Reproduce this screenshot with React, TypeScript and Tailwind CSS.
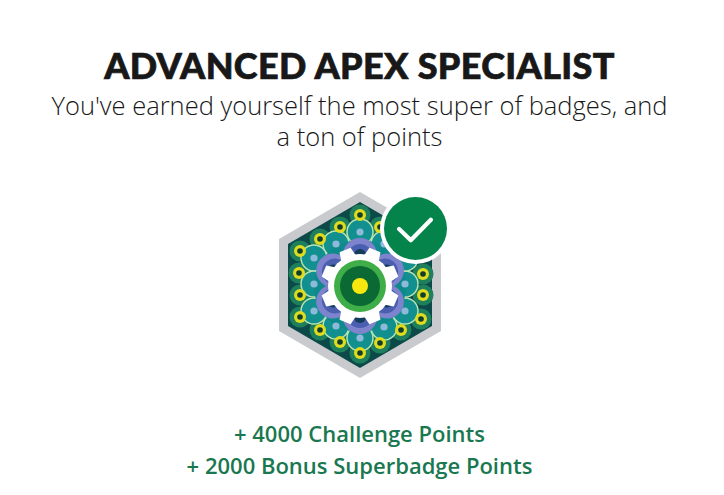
const outerDots = [
  [0, -71], [-20, -59], [-40, -47], [-60, -35], [-61, -13], [-60, 9], [-60, 31], [-40, 44], [-20, 56],
  [0, 67], [20, 57], [41, 44], [61, 33], [63, 9], [63, -12], [60, -35], [40, -47], [20, -59],
];

const lobes = [
  [0, -54], [-24, -42], [-46, -28], [-46, -2], [-46, 25], [-24, 40],
  [0, 52], [24, 41], [45, 25], [45, -2], [45, -28], [24, -42],
];

const gearTeeth = [22.5, 67.5, 112.5, 157.5, 202.5, 247.5, 292.5, 337.5];

function Badge() {
  return (
    <svg width="162" height="186" viewBox="-81 -93 162 186">
      <polygon points="0,-93 81,-46 81,46 0,93 -81,46 -81,-46" fill="#c9cacd" />
      <polygon points="0,-83 72,-41 72,41 0,83 -72,41 -72,-41" fill="#0c4a4a" />
      <g transform="translate(0 1)">
        {outerDots.map(([x, y], i) => (
          <circle key={i} cx={x} cy={y} r="10.5" fill="#1d7f5c" />
        ))}
        {lobes.map(([x, y], i) => (
          <circle key={i} cx={x} cy={y} r="13" fill="#12908f" stroke="#b9e5b4" strokeWidth="1.4" />
        ))}
        {outerDots.map(([x, y], i) => (
          <g key={i}>
            <circle cx={x} cy={y} r="6" fill="#dfdc20" />
            <circle cx={x} cy={y} r="2.8" fill="#123c2c" />
          </g>
        ))}
        <circle r="46" fill="#0f8a8c" />
        {lobes.map(([x, y], i) => (
          <circle key={i} cx={x} cy={y} r="3.6" fill="#8db9da" />
        ))}
        {[0, 60, 120, 180, 240, 300].map((a) => (
          <g key={a} transform={`rotate(${a})`}>
            <circle cx="0" cy="-31" r="17" fill="#7d83cc" />
            <circle cx="0" cy="-29" r="13" fill="#4a5fb0" />
            <circle cx="0" cy="-31" r="6" fill="#123c5a" />
          </g>
        ))}
        <circle r="32" fill="#ffffff" />
        {gearTeeth.map((a) => (
          <polygon key={a} points="-8,-29 8,-29 6,-39 -6,-39" fill="#ffffff" transform={`rotate(${a})`} />
        ))}
        <circle r="26" fill="#3fae49" />
        <circle r="20" fill="#0b6a33" />
        <circle r="8" fill="#f6e80e" />
      </g>
    </svg>
  );
}

function CheckMark() {
  return (
    <div className="absolute left-[101px] top-[1px] flex h-[71px] w-[71px] items-center justify-center rounded-full bg-white">
      <div className="flex h-[63px] w-[63px] items-center justify-center rounded-full bg-[#04844b]">
        <svg width="38" height="28" viewBox="0 0 40 30" fill="none">
          <path d="M3 15 L15.5 27 L37 5" stroke="#ffffff" strokeWidth="4.5" strokeLinecap="round" strokeLinejoin="round" />
        </svg>
      </div>
    </div>
  );
}

export default function App() {
  return (
    <div className="flex h-[495px] w-[719px] flex-col items-center overflow-hidden bg-white pt-[44px] font-['Open_Sans',sans-serif]">
      <h1 className="font-['Lato',sans-serif] text-[36px] leading-[42px] font-black tracking-[0.35px] text-[#181818] [-webkit-text-stroke:0.7px_#181818]">
        ADVANCED APEX SPECIALIST
      </h1>
      <p className="mt-[4px] w-[628px] text-center text-[25.5px] leading-[31px] font-light text-[#181818]">
        You've earned yourself the most super of badges, and a ton of points
      </p>
      <div className="relative mt-[40px] h-[186px] w-[162px]">
        <Badge />
        <CheckMark />
      </div>
      <div className="mt-[39px] text-center text-[22px] leading-[32px] font-semibold text-[#19784f]">
        <p>+ 4000 Challenge Points</p>
        <p>+ 2000 Bonus Superbadge Points</p>
      </div>
    </div>
  );
}
